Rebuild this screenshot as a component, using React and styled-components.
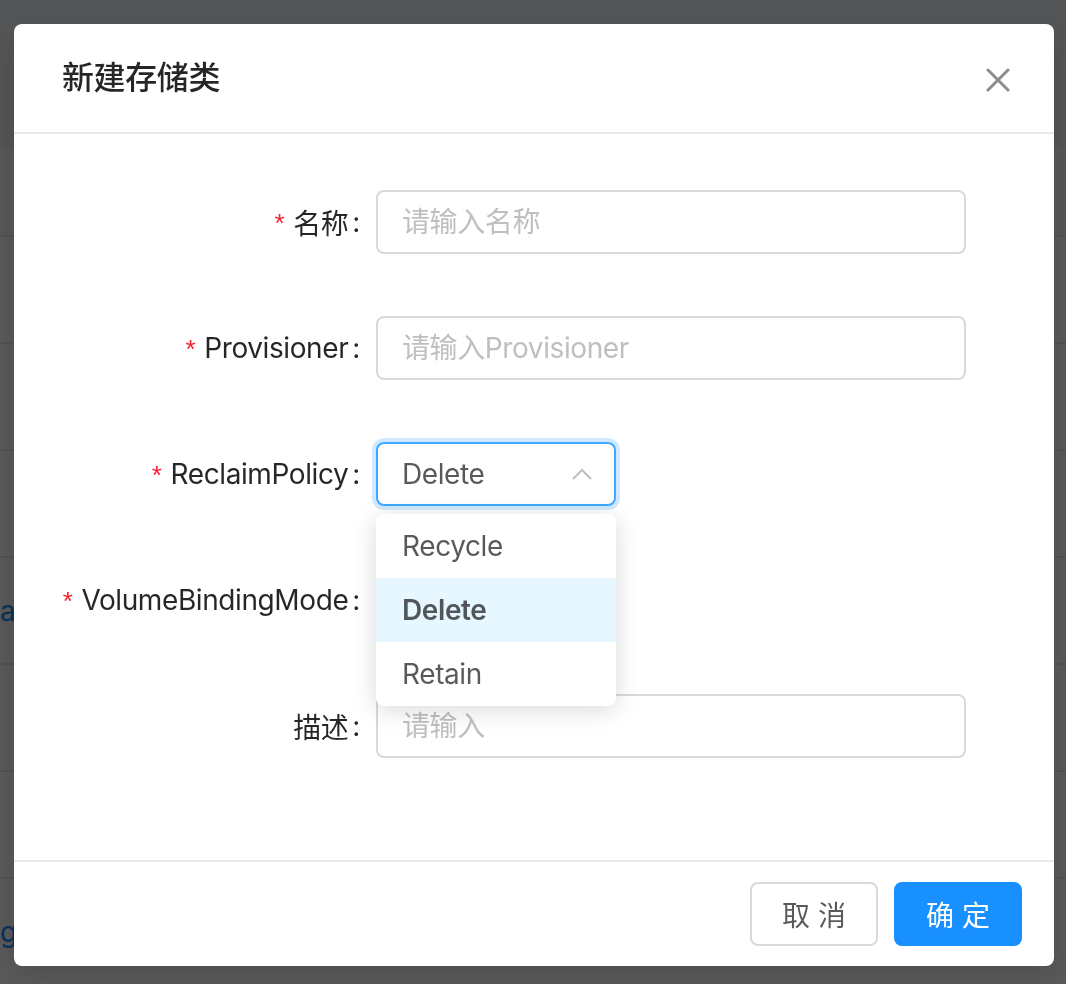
import React from 'react'
import styled, {createGlobalStyle, css} from 'styled-components'

const GlobalStyle = createGlobalStyle`
   html, body {
      margin: 0;
      padding: 0;
   }
   body {
      width: 1066px;
      height: 984px;
      overflow: hidden;
      font-family: Inter, 'Noto Sans CJK SC', sans-serif;
      letter-spacing: -0.4px;
      background: #f0f2f5;
   }
   * {
      box-sizing: border-box;
   }
`;

// page that sits behind the mask
const Page = styled.div`
   width: 1066px;
   height: 984px;
   display: flex;
   flex-direction: column;
`;

const TopArea = styled.div`
   height: 148px;
   flex-shrink: 0;
`;

const Table = styled.div`
   flex: 1;
   background: #fff;
   display: flex;
   flex-direction: column;
`;

const TableHead = styled.div`
   height: 89px;
   flex-shrink: 0;
   background: #fafafa;
   border-bottom: 2px solid #e8e8e8;
`;

const TableRow = styled.div`
   height: 107px;
   flex-shrink: 0;
   display: flex;
   align-items: center;
   border-bottom: 2px solid #e8e8e8;
   font-size: 28px;
`;

const LinkCell = styled.span`
   color: #1890ff;
`;

const Mask = styled.div`
   position: fixed;
   inset: 0;
   background: rgba(0, 0, 0, 0.65);
   display: flex;
   justify-content: center;
   align-items: flex-start;
   padding: 24px 0 0 2px;
`;

const Modal = styled.div`
   width: 1040px;
   background: #fff;
   border-radius: 8px;
   position: relative;
   box-shadow: 0 8px 32px rgba(0, 0, 0, 0.15);
`;

const Header = styled.div`
   padding: 32px 48px;
   border-bottom: 2px solid #e8e8e8;
`;

const Title = styled.div`
   font-size: 32px;
   line-height: 44px;
   font-weight: 500;
   color: rgba(0, 0, 0, 0.85);
`;

const CloseButton = styled.button`
   position: absolute;
   top: 0;
   right: 0;
   width: 112px;
   height: 112px;
   border: 0;
   background: transparent;
   display: flex;
   align-items: center;
   justify-content: center;
   cursor: pointer;
   padding: 0;
`;

const Body = styled.div`
   padding: 49px 48px 47px;
`;

const FormItem = styled.div`
   display: flex;
   align-items: center;
   min-height: 78px;
   margin-bottom: 48px;
`;

const Label = styled.label`
   width: 314px;
   flex-shrink: 0;
   display: flex;
   justify-content: flex-end;
   align-items: center;
   font-size: 28px;
   color: rgba(0, 0, 0, 0.85);
   white-space: nowrap;
`;

const Star = styled.span`
   color: #f5222d;
   font-family: 'Liberation Sans', sans-serif;
   font-size: 26px;
   line-height: 1;
   margin-right: 9px;
   position: relative;
   top: 1px;
`;

const Colon = styled.span`
   margin: 0 16px 0 4px;
`;

const Control = styled.div`
   width: 590px;
`;

const Input = styled.input`
   display: block;
   width: 100%;
   height: 64px;
   padding: 0 24px;
   border: 2px solid #d9d9d9;
   border-radius: 8px;
   outline: none;
   font-family: inherit;
   letter-spacing: inherit;
   font-size: 28px;
   color: rgba(0, 0, 0, 0.65);
   background: #fff;
   &::placeholder {
      color: #bfbfbf;
   }
`;

const SelectWrap = styled.div`
   position: relative;
   width: 240px;
`;

const SelectBox = styled.div`
   height: 64px;
   padding: 0 22px 0 24px;
   border: 2px solid #d9d9d9;
   border-radius: 8px;
   display: flex;
   align-items: center;
   justify-content: space-between;
   font-size: 28px;
   color: rgba(0, 0, 0, 0.65);
   background: #fff;
   ${props => props.$focused && css`
      border-color: #40a9ff;
      box-shadow: 0 0 0 4px rgba(24, 144, 255, 0.2);
   `}
`;

const Dropdown = styled.ul`
   position: absolute;
   top: calc(100% + 8px);
   left: 0;
   width: 240px;
   margin: 0;
   padding: 0;
   list-style: none;
   background: #fff;
   border-radius: 8px;
   overflow: hidden;
   box-shadow: 0 4px 24px rgba(0, 0, 0, 0.15);
   z-index: 5;
`;

const Option = styled.li`
   height: 64px;
   padding: 0 26px;
   display: flex;
   align-items: center;
   font-size: 28px;
   color: rgba(0, 0, 0, 0.65);
   ${props => props.$active && css`
      background: #e6f7ff;
      font-weight: 600;
   `}
`;

const Footer = styled.div`
   border-top: 2px solid #e8e8e8;
   padding: 20px 32px;
   display: flex;
   justify-content: flex-end;
   gap: 16px;
`;

const Button = styled.button`
   height: 64px;
   width: 128px;
   padding: 0;
   border-radius: 8px;
   font-family: inherit;
   font-size: 28px;
   cursor: pointer;
   border: 2px solid #d9d9d9;
   background: #fff;
   color: rgba(0, 0, 0, 0.65);
   ${props => props.$primary && css`
      border-color: #1890ff;
      background: #1890ff;
      color: #fff;
   `}
`;

const CloseIcon = () => (
   <svg width="24" height="24" viewBox="0 0 24 24">
      <path d="M2 2 L22 22 M22 2 L2 22" stroke="#8c8c8c" strokeWidth="3" strokeLinecap="round" fill="none"/>
   </svg>
);

const ArrowUp = () => (
   <svg width="20" height="12" viewBox="0 0 20 12">
      <polyline points="1,11 10,2 19,11" stroke="#bfbfbf" strokeWidth="2" fill="none"/>
   </svg>
);

const policies = ['Recycle', 'Delete', 'Retain'];

const Field = ({label, required, children}) => (
   <FormItem>
      <Label>
         {required ? <Star>*</Star> : null}
         {label}
         <Colon>:</Colon>
      </Label>
      <Control>{children}</Control>
   </FormItem>
);

const App = () => {
   return (
      <>
         <GlobalStyle/>
         <Page>
            <TopArea/>
            <Table>
               <TableHead/>
               <TableRow/>
               <TableRow/>
               <TableRow/>
               <TableRow><LinkCell>a</LinkCell></TableRow>
               <TableRow/>
               <TableRow/>
               <TableRow><LinkCell>ge</LinkCell></TableRow>
            </Table>
         </Page>
         <Mask>
            <Modal>
               <Header>
                  <Title>新建存储类</Title>
               </Header>
               <CloseButton aria-label="close"><CloseIcon/></CloseButton>
               <Body>
                  <Field label="名称" required>
                     <Input placeholder="请输入名称"/>
                  </Field>
                  <Field label="Provisioner" required>
                     <Input placeholder="请输入Provisioner"/>
                  </Field>
                  <Field label="ReclaimPolicy" required>
                     <SelectWrap>
                        <SelectBox $focused>
                           <span>Delete</span>
                           <ArrowUp/>
                        </SelectBox>
                        <Dropdown>
                           {policies.map(p => (
                              <Option key={p} $active={p === 'Delete'}>{p}</Option>
                           ))}
                        </Dropdown>
                     </SelectWrap>
                  </Field>
                  <Field label="VolumeBindingMode" required>
                     <SelectWrap>
                        <SelectBox/>
                     </SelectWrap>
                  </Field>
                  <Field label="描述">
                     <Input placeholder="请输入"/>
                  </Field>
               </Body>
               <Footer>
                  <Button>取 消</Button>
                  <Button $primary>确 定</Button>
               </Footer>
            </Modal>
         </Mask>
      </>
   );
}

export default App;
